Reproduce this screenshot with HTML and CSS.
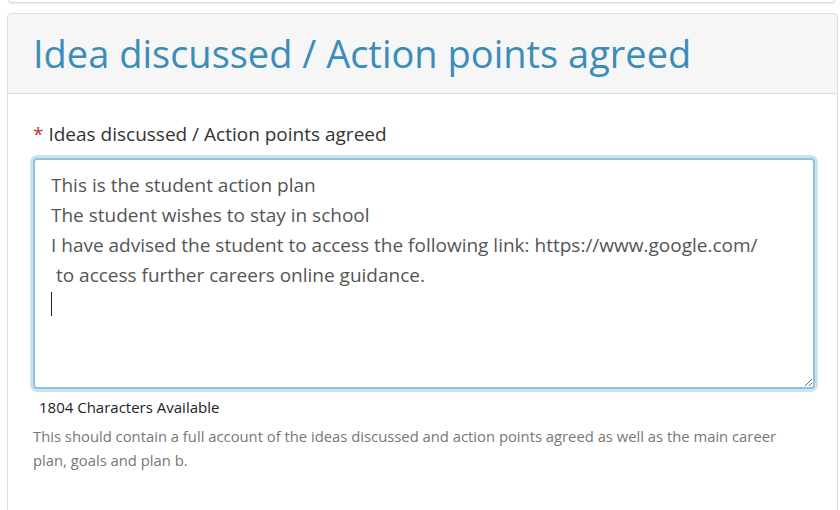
FILE: index.html
```html
<!DOCTYPE html>
<html>
<head>
<meta charset="utf-8">
<link rel="stylesheet" href="styles.css">
</head>
<body>
<div class="prev-panel"></div>
<div class="panel">
  <div class="panel-heading">
    <h2 class="panel-title">Idea discussed / Action points agreed</h2>
  </div>
  <div class="panel-body">
    <label class="field-label" for="ideas"><span class="req">*</span> Ideas discussed / Action points agreed</label>
    <div class="textarea-wrap">
      <textarea id="ideas" class="field-input">This is the student action plan
The student wishes to stay in school
I have advised the student to access the following link: https://www.google.com/
 to access further careers online guidance.
</textarea>
      <span class="caret"></span>
    </div>
    <div class="char-count">1804 Characters Available</div>
    <p class="help">This should contain a full account of the ideas discussed and action points agreed as well as the main career plan, goals and plan b.</p>
  </div>
</div>
</body>
</html>
```
FILE: styles.css
```css
html, body {
  margin: 0;
  padding: 0;
  background: #fff;
  height: 510px;
  overflow: hidden;
  font-family: "Open Sans", "Noto Sans", sans-serif;
}
.prev-panel {
  height: 2px;
  margin: 0 5px 0 8px;
  border: 1px solid #dcdcdc;
  border-top: none;
  border-radius: 0 0 4px 4px;
  box-shadow: 0 1px 2px rgba(0,0,0,0.08);
}
.panel {
  margin: 10px 2px 0 7px;
  border: 1px solid #dddddd;
  border-radius: 4px;
  height: 520px;
}
.panel-heading {
  background: #f6f6f6;
  border-bottom: 1px solid #dddddd;
  border-radius: 4px 4px 0 0;
  height: 79px;
  padding: 0 25px;
  display: flex;
  align-items: center;
}
.panel-title {
  margin: 0;
  font-weight: 400;
  font-size: 38px;
  color: #3a8dbb;
  line-height: 1;
  padding-bottom: 2px;
}
.panel-body {
  padding: 27px 22px 0 25px;
}
.field-label {
  display: block;
  font-size: 19px;
  color: #333;
  line-height: 26px;
  margin-bottom: 11px;
}
.req {
  color: #c9302c;
}
.textarea-wrap {
  position: relative;
}
.field-input {
  display: block;
  box-sizing: border-box;
  width: 782px;
  height: 231px;
  margin: 0;
  padding: 10px 16px;
  border: 2px solid #8ec3da;
  border-radius: 4px;
  box-shadow: 0 0 0 3px #cde2ee;
  outline: none;
  font-family: inherit;
  font-size: 19px;
  line-height: 30px;
  color: #555;
  resize: vertical;
}
.caret {
  position: absolute;
  left: 18px;
  top: 134px;
  width: 1px;
  height: 24px;
  background: #222;
}
.char-count {
  font-size: 15px;
  color: #222;
  padding-left: 6px;
  margin-top: 7px;
  line-height: 22px;
}
.help {
  margin: 6px 0 0;
  max-width: 765px;
  font-size: 14.8px;
  color: #777;
  line-height: 24px;
}
```
